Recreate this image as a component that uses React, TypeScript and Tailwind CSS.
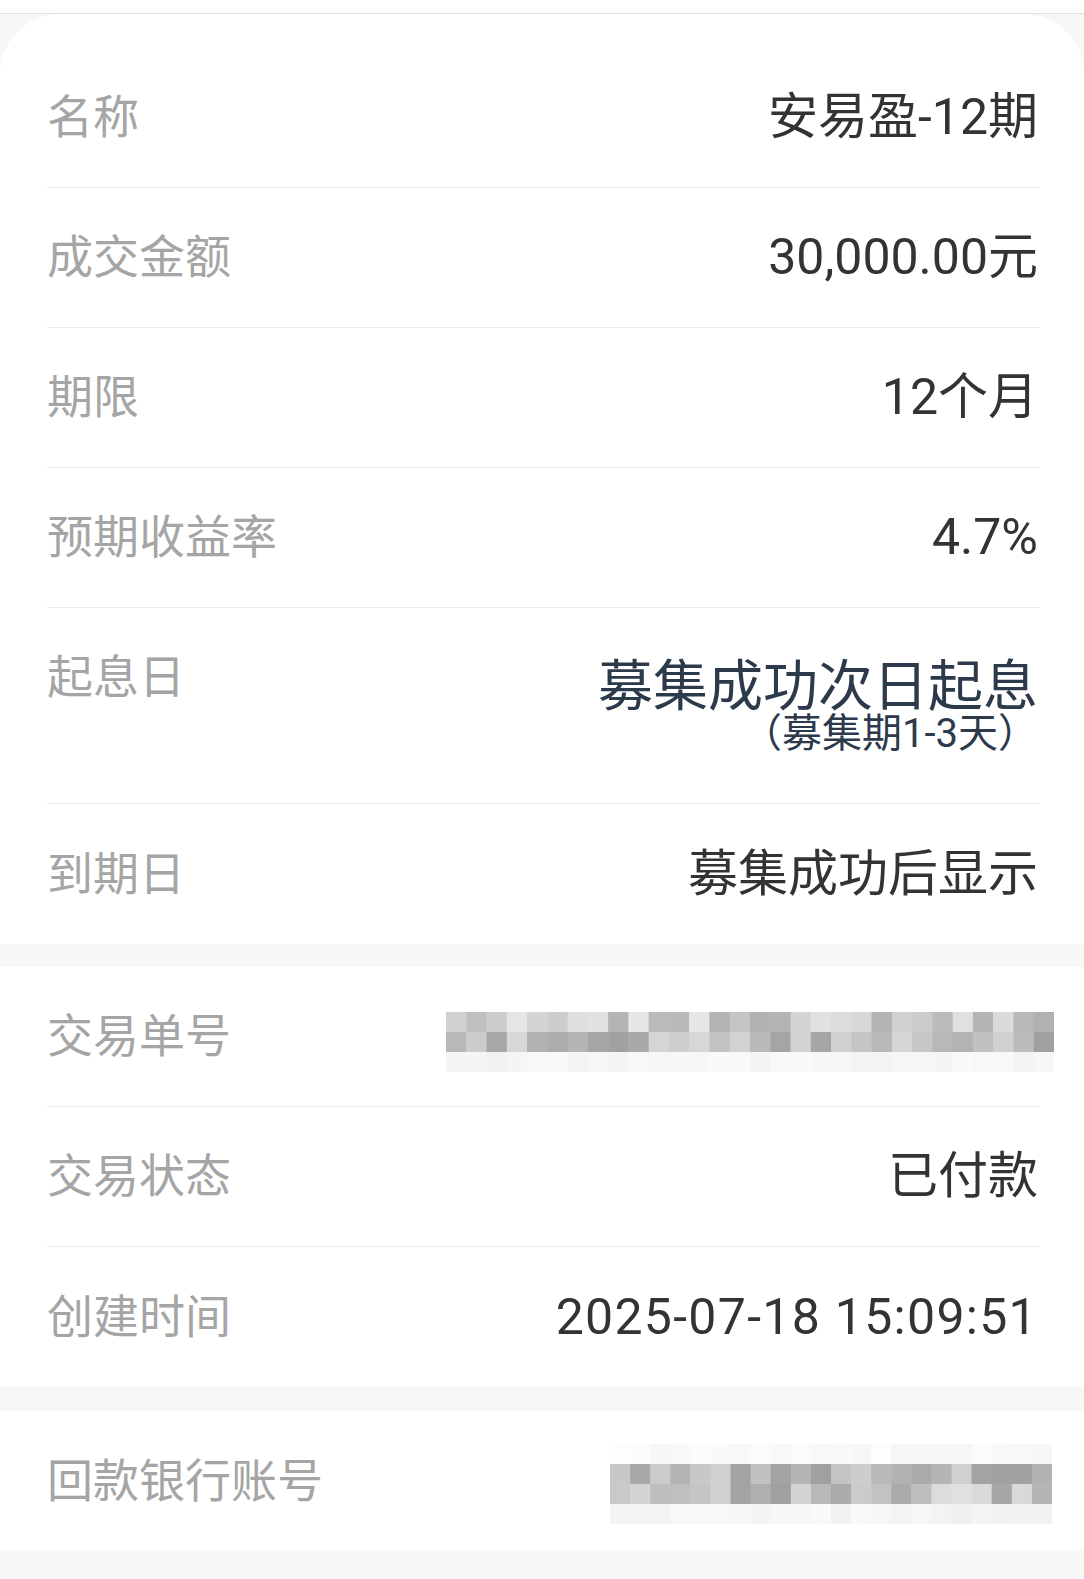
import React from 'react';

type Row = { label: string; value?: string; mosaic?: 'order' | 'bank'; wide?: boolean };

const productRows: Row[] = [
  { label: '名称', value: '安易盈-12期' },
  { label: '成交金额', value: '30,000.00元' },
  { label: '期限', value: '12个月' },
  { label: '预期收益率', value: '4.7%' },
];

const tradeRows: Row[] = [
  { label: '交易单号', mosaic: 'order' },
  { label: '交易状态', value: '已付款' },
  { label: '创建时间', value: '2025-07-18 15:09:51', wide: true },
];

// deterministic grey values for the blurred-out mosaic
function greys(seed: number, count: number, lo: number, hi: number) {
  const out: string[] = [];
  let s = seed;
  for (let i = 0; i < count; i++) {
    s = (s * 1103515245 + 12345) % 2147483648;
    const v = Math.round(lo + ((s / 2147483648) * (hi - lo)));
    const h = v.toString(16).padStart(2, '0');
    out.push(`#${h}${h}${h}`);
  }
  return out;
}

function Mosaic({ cols, rows, seed, width }: { cols: number; rows: [number, number][]; seed: number; width: number }) {
  const cell = width / cols;
  const height = rows.length * 20;
  return (
    <svg width={width} height={height} viewBox={`0 0 ${width} ${height}`} className="block">
      {rows.map(([lo, hi], r) =>
        greys(seed + r * 97, cols, lo, hi).map((c, i) => (
          <rect key={`${r}-${i}`} x={i * cell} y={r * 20} width={cell + 0.5} height={20.5} fill={c} />
        ))
      )}
    </svg>
  );
}

function InfoRow({ row, last }: { row: Row; last?: boolean }) {
  return (
    <div className={`flex h-[140px] items-center justify-between ${last ? '' : 'border-b border-[#ececec]'}`}>
      <span className="text-[46px] text-[#a5a5a5]">{row.label}</span>
      {row.value && (
        <span className={`pr-[2px] text-[50px] text-[#333333] ${row.wide ? 'tracking-[1.3px]' : ''}`}>{row.value}</span>
      )}
      {row.mosaic === 'order' && (
        <div className="-mr-[14px] mt-[10px]">
          <Mosaic cols={30} seed={7} width={608} rows={[[0xb0, 0xe6], [0x9e, 0xd8], [0xf2, 0xfb]]} />
        </div>
      )}
      {row.mosaic === 'bank' && (
        <div className="-mr-[12px] mt-[6px]">
          <Mosaic cols={22} seed={31} width={442} rows={[[0xf6, 0xfd], [0x96, 0xd6], [0xa0, 0xe2], [0xf0, 0xfa]]} />
        </div>
      )}
    </div>
  );
}

export default function App() {
  return (
    <div className="min-h-screen bg-[#f7f7f7] font-['Roboto','Noto_Sans_CJK_SC',sans-serif]">
      <div className="h-[14px] border-b border-[#e2e2e2] bg-white" />

      <section className="rounded-t-[60px] bg-white pl-[47px] pr-[44px] pt-[34px]">
        {productRows.map((r) => (
          <InfoRow key={r.label} row={r} />
        ))}
        <div className="flex h-[196px] items-start justify-between border-b border-[#ececec] pt-[36px]">
          <span className="text-[46px] leading-[66px] text-[#a5a5a5]">起息日</span>
          <div className="flex flex-col items-end pr-[2px] text-[#2d3a4b]">
            <span className="mt-[15px] text-[55px] leading-[55px]">募集成功次日起息</span>
            <span className="text-[40px] leading-[40px]">（募集期1-3天）</span>
          </div>
        </div>
        <div className="flex h-[140px] items-center justify-between">
          <span className="text-[46px] text-[#a5a5a5]">到期日</span>
          <span className="pr-[2px] text-[50px] text-[#333333]">募集成功后显示</span>
        </div>
      </section>

      <section className="mt-[23px] bg-white pl-[47px] pr-[44px]">
        {tradeRows.map((r, i) => (
          <InfoRow key={r.label} row={r} last={i === tradeRows.length - 1} />
        ))}
      </section>

      <section className="mt-[24px] h-[139px] bg-white pl-[47px] pr-[44px]">
        <InfoRow row={{ label: '回款银行账号', mosaic: 'bank' }} last />
      </section>
    </div>
  );
}
